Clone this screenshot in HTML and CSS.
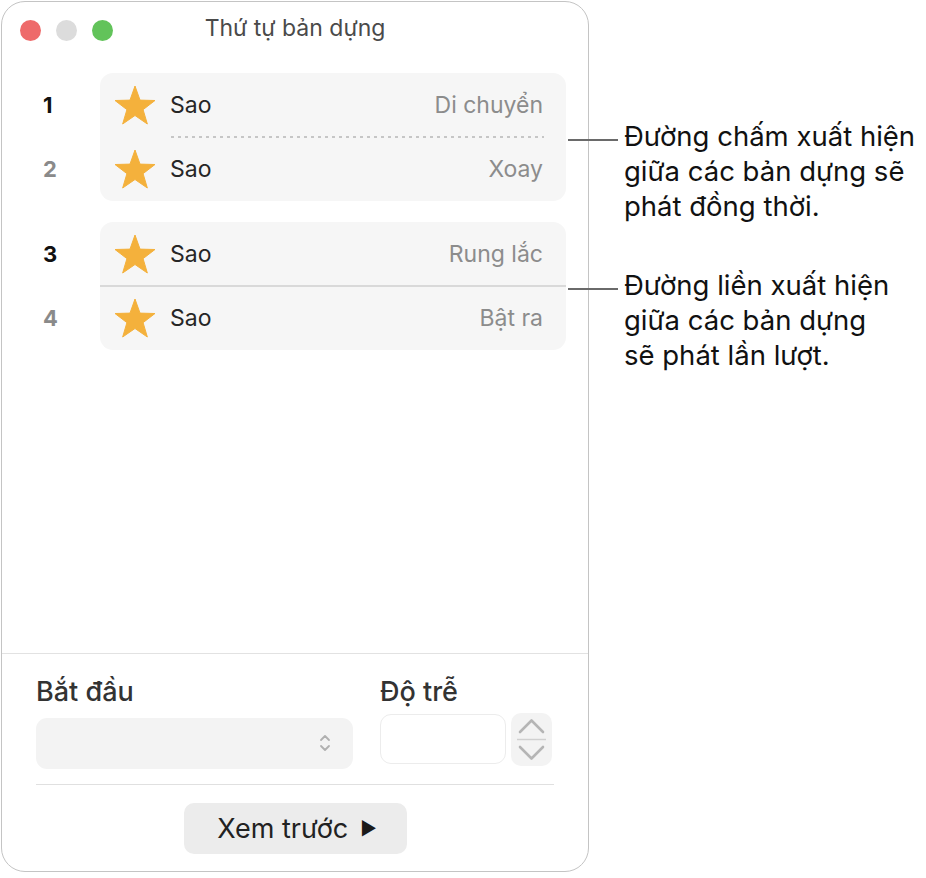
FILE: index.html
```html
<!DOCTYPE html>
<html lang="vi">
<head>
<meta charset="utf-8">
<title>Thứ tự bản dựng</title>
<link rel="stylesheet" href="styles.css">
</head>
<body>
<div class="page">
  <div class="window">
    <div class="titlebar">
      <div class="lights">
        <span class="light red"></span>
        <span class="light gray"></span>
        <span class="light green"></span>
      </div>
      <div class="title">Thứ tự bản dựng</div>
    </div>

    <div class="list">
      <div class="group">
        <div class="nums">
          <div class="num active">1</div>
          <div class="num">2</div>
        </div>
        <div class="box">
          <div class="row">
            <svg class="star" viewBox="0 0 40 40"><polygon points="20,1 25,15.12 39.97,15.51 28.08,24.63 32.34,38.99 20,30.5 7.66,38.99 11.92,24.63 0.03,15.51 15,15.12" fill="#f4b13c" stroke="#f4b13c" stroke-width="1" stroke-linejoin="round"/></svg>
            <span class="name">Sao</span>
            <span class="effect">Di chuyển</span>
          </div>
          <div class="sep dashed"></div>
          <div class="row">
            <svg class="star" viewBox="0 0 40 40"><polygon points="20,1 25,15.12 39.97,15.51 28.08,24.63 32.34,38.99 20,30.5 7.66,38.99 11.92,24.63 0.03,15.51 15,15.12" fill="#f4b13c" stroke="#f4b13c" stroke-width="1" stroke-linejoin="round"/></svg>
            <span class="name">Sao</span>
            <span class="effect">Xoay</span>
          </div>
        </div>
      </div>

      <div class="group">
        <div class="nums">
          <div class="num active">3</div>
          <div class="num">4</div>
        </div>
        <div class="box">
          <div class="row">
            <svg class="star" viewBox="0 0 40 40"><polygon points="20,1 25,15.12 39.97,15.51 28.08,24.63 32.34,38.99 20,30.5 7.66,38.99 11.92,24.63 0.03,15.51 15,15.12" fill="#f4b13c" stroke="#f4b13c" stroke-width="1" stroke-linejoin="round"/></svg>
            <span class="name">Sao</span>
            <span class="effect">Rung lắc</span>
          </div>
          <div class="sep solid"></div>
          <div class="row">
            <svg class="star" viewBox="0 0 40 40"><polygon points="20,1 25,15.12 39.97,15.51 28.08,24.63 32.34,38.99 20,30.5 7.66,38.99 11.92,24.63 0.03,15.51 15,15.12" fill="#f4b13c" stroke="#f4b13c" stroke-width="1" stroke-linejoin="round"/></svg>
            <span class="name">Sao</span>
            <span class="effect">Bật ra</span>
          </div>
        </div>
      </div>
    </div>

    <div class="bottom">
      <div class="fields">
        <div class="field start">
          <div class="label">Bắt đầu</div>
          <div class="select">
            <svg class="updown" viewBox="0 0 12 22"><polyline points="2,8 6,4 10,8" fill="none" stroke="#b0b0b0" stroke-width="1.8" stroke-linecap="round" stroke-linejoin="round"/><polyline points="2,14 6,18 10,14" fill="none" stroke="#b0b0b0" stroke-width="1.8" stroke-linecap="round" stroke-linejoin="round"/></svg>
          </div>
        </div>
        <div class="field delay">
          <div class="label">Độ trễ</div>
          <div class="delay-row">
            <div class="input"></div>
            <div class="stepper">
              <svg viewBox="0 0 41 53"><polyline points="9,19 20.5,7.5 32,19" fill="none" stroke="#b5b5b5" stroke-width="2.6" stroke-linecap="round" stroke-linejoin="round"/><line x1="6" y1="26.5" x2="35" y2="26.5" stroke="#d0d0d0" stroke-width="1.5"/><polyline points="9,34 20.5,45.5 32,34" fill="none" stroke="#b5b5b5" stroke-width="2.6" stroke-linecap="round" stroke-linejoin="round"/></svg>
            </div>
          </div>
        </div>
      </div>
      <div class="hr"></div>
      <div class="actions">
        <button class="preview">Xem trước <span class="play">▶</span></button>
      </div>
    </div>
  </div>

  <div class="notes">
    <div class="note first">
      <span class="leader"></span>
      <p>Đường chấm xuất hiện<br>giữa các bản dựng sẽ<br>phát đồng thời.</p>
    </div>
    <div class="note second">
      <span class="leader"></span>
      <p>Đường liền xuất hiện<br>giữa các bản dựng<br>sẽ phát lần lượt.</p>
    </div>
  </div>
</div>
</body>
</html>
```

FILE: styles.css
```css
* { box-sizing: border-box; }

html, body {
  margin: 0;
  padding: 0;
  background: #ffffff;
}

body {
  font-family: Inter, "Noto Sans", "Liberation Sans", sans-serif;
  color: #222;
  width: 926px;
  height: 878px;
  overflow: hidden;
}

.page {
  display: flex;
  align-items: flex-start;
  padding: 1px 0 0 1px;
}

.window {
  width: 588px;
  height: 871px;
  border: 1.5px solid #c4c4c4;
  border-radius: 24px;
  background: #fff;
  display: flex;
  flex-direction: column;
  position: relative;
  z-index: 1;
}

.titlebar {
  height: 56px;
  display: flex;
  align-items: center;
  position: relative;
}

.lights {
  display: flex;
  gap: 15px;
  padding-left: 18px;
}

.light {
  width: 21px;
  height: 21px;
  border-radius: 50%;
  display: block;
}
.light.red { background: #ee6a6a; }
.light.gray { background: #dcdcdc; }
.light.green { background: #62c35a; }

.title {
  position: absolute;
  left: 0;
  right: 0;
  top: 12px;
  text-align: center;
  font-size: 23px;
  color: #4a4a4a;
}

.list {
  flex: 1;
  padding-top: 15px;
  display: flex;
  flex-direction: column;
  gap: 21px;
}

.group {
  display: flex;
}

.nums {
  width: 98px;
  display: flex;
  flex-direction: column;
}

.num {
  height: 64px;
  display: flex;
  align-items: center;
  padding-left: 41px;
  font-size: 22px;
  font-weight: 700;
  color: #8a8a8a;
}
.num.active { color: #111; }

.box {
  width: 466px;
  background: #f6f6f6;
  border-radius: 13px;
  display: flex;
  flex-direction: column;
  position: relative;
}

.row {
  height: 64px;
  display: flex;
  align-items: center;
  padding: 0 23px 0 15px;
}

.star {
  width: 40px;
  height: 40px;
  flex: none;
}

.name {
  margin-left: 15px;
  font-size: 23px;
  color: #262626;
}

.effect {
  margin-left: auto;
  font-size: 23px;
  color: #8c8c8c;
}

.sep {
  height: 0;
  position: relative;
}
.sep.dashed::before {
  content: "";
  position: absolute;
  left: 71px;
  right: 22px;
  top: -1px;
  height: 1.5px;
  background: repeating-linear-gradient(to right, #c6c6c6 0 3px, transparent 3px 7px);
}
.sep.solid::before {
  content: "";
  position: absolute;
  left: 0;
  right: 0;
  top: -1px;
  height: 1.5px;
  background: #d9d9d9;
}

.bottom {
  border-top: 1.5px solid #e2e2e2;
  padding: 22px 34px 17px 34px;
}

.fields {
  display: grid;
  grid-template-columns: 317px 172px;
  column-gap: 27px;
}

.label {
  font-size: 27px;
  font-weight: 500;
  color: #333;
  line-height: 32px;
  height: 32px;
}

.select {
  margin-top: 10px;
  height: 51px;
  background: #f3f3f3;
  border-radius: 11px;
  display: flex;
  align-items: center;
  justify-content: flex-end;
  padding-right: 22px;
}

.updown {
  width: 12px;
  height: 22px;
}

.delay-row {
  margin-top: 5px;
  display: flex;
  gap: 5px;
  align-items: flex-start;
}

.input {
  margin-top: 1px;
  width: 126px;
  height: 50px;
  border: 1.5px solid #ececec;
  border-radius: 11px;
  background: #fff;
}

.stepper {
  width: 41px;
  height: 53px;
  background: #f3f3f3;
  border-radius: 10px;
}
.stepper svg {
  width: 41px;
  height: 53px;
  display: block;
}

.hr {
  margin-top: 15px;
  height: 1.5px;
  background: #e0e0e0;
}

.actions {
  display: flex;
  justify-content: center;
  padding-top: 18px;
}

.preview {
  width: 223px;
  height: 51px;
  border: none;
  border-radius: 10px;
  background: #ececec;
  font-family: Inter, "Noto Sans", "Liberation Sans", sans-serif;
  font-size: 27px;
  color: #222;
  display: flex;
  align-items: center;
  justify-content: center;
  gap: 12px;
  padding: 0 0 0 4px;
}

.play {
  font-size: 18px;
  color: #1a1a1a;
}

.notes {
  margin-left: -21px;
  display: flex;
  flex-direction: column;
  padding-top: 118px;
  gap: 44px;
  position: relative;
  z-index: 2;
}

.note {
  display: flex;
  align-items: flex-start;
}

.leader {
  width: 50px;
  height: 1.5px;
  background: #6a6a6a;
  margin-top: 20px;
  margin-right: 6px;
  flex: none;
}

.note p {
  margin: 0;
  font-size: 27.5px;
  line-height: 35px;
  color: #111;
}
```
